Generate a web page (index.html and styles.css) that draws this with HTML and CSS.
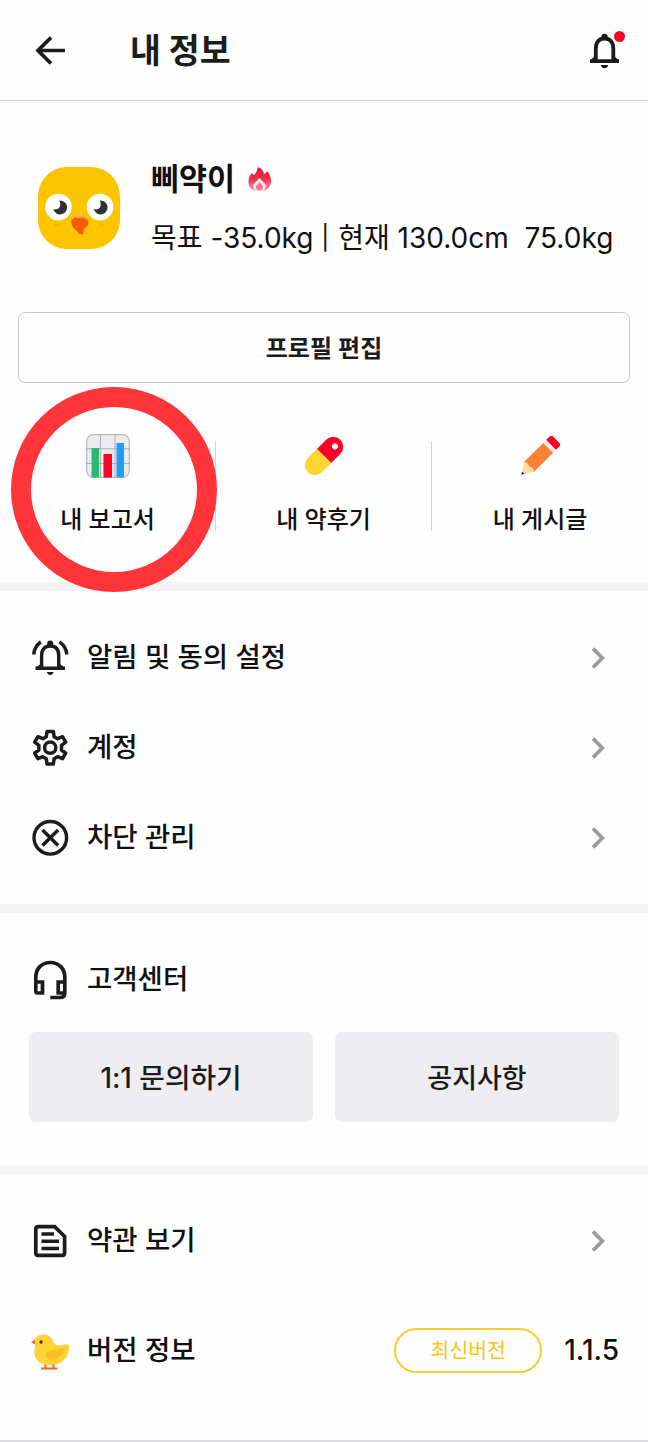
FILE: index.html
```html
<!DOCTYPE html>
<html lang="ko">
<head>
<meta charset="utf-8">
<title>내 정보</title>
<link rel="stylesheet" href="styles.css">
</head>
<body>
<main class="app">
  <header class="header">
    <svg class="back" width="36" height="36" viewBox="0 0 36 36"><path d="M20 5.500 7 18.500l13 13M7 18.500h27" fill="none" stroke="#1c1c1c" stroke-width="3.700"/></svg>
    <h1 class="title">내 정보</h1>
    <span class="bell">
      <svg width="32" height="38" viewBox="0 0 32 38"><path d="M6.800 28.800V17.500C6.800 11 10.400 7.500 15.500 7.500s8.800 3.500 8.800 10V28.800M1 30.200H30" fill="none" stroke="#1c1c1c" stroke-width="3.800"/><path d="m1 29.500 4.500-4v4zM30 29.500l-4.500-4v4zM12.300 8V6a3.200 3.200 0 0 1 6.400 0v2zM11.700 34h7.600q-1 3.200-3.800 3.200T11.700 34z" fill="#1c1c1c"/></svg>
      <i class="dot"></i>
    </span>
  </header>

  <section class="profile">
    <svg class="avatar" width="82" height="82" viewBox="0 0 82 82">
      <path d="M29 0H53C70 0 82 14 82 30V53C82 70 68 82 53 82H29C13 82 0 69 0 53V30C0 13 13 0 29 0z" fill="#fdc500"/>
      <circle cx="20.500" cy="40" r="13.300" fill="#fff"/><circle cx="62" cy="40" r="13.300" fill="#fff"/>
      <path d="M21.500 33.500a7 7 0 1 1-6.200 8.500q4.500 1.500 6.500-2 1-3-.300-6.500z" fill="#303033"/>
      <path d="M62 33.500a7 7 0 1 1-6.200 8.500q4.500 1.500 6.500-2 1-3-.300-6.500z" fill="#303033"/>
      <path d="M33 55q1.500-5.500 8.500-5.500 5 0 9 4.500l-.500 4-4 4-1 5.500q-4 .5-6-3.500-5-3-6-9z" fill="#fb5a05"/>
      <path d="M38 51q0-2.500 3.500-2.500t3.500 2.500z" fill="#fda080"/>
      <path d="M16 57q3-1.500 6 0v2h-6zM60 57q3-1.500 6 0v2h-6z" fill="#f6b500"/>
    </svg>
    <div class="who">
      <div class="name">삐약이
        <svg class="flame" width="24" height="25" viewBox="0 0 24 25"><defs><linearGradient id="fl" x2="0" y2="1"><stop offset="0" stop-color="#ed0e38"/><stop offset=".5" stop-color="#f0304f"/><stop offset="1" stop-color="#fb9bab"/></linearGradient></defs><path d="M10 0q5 2 6 7 2 0 3-3 4 4 4 10 0 10-11.500 10T.5 14.500Q.5 9 4 6q1 2 2 2 3-3 4-8z" fill="url(#fl)"/><path d="m11.500 11 6 6.500q1 6.500-6 6.500t-6-6.500z" fill="#fff0f2"/><path d="m11.500 15 3.500 4q.500 4.500-3.500 4.500T8 19z" fill="#f8758c"/></svg>
      </div>
      <div class="stats">목표 -35.0kg <span class="bar">|</span> 현재 130.0cm&nbsp; 75.0kg</div>
    </div>
  </section>
  <button class="edit">프로필 편집</button>

  <nav class="tabs">
    <a class="tab">
      <svg width="44" height="44" viewBox="0 0 44 44"><rect x=".6" y=".6" width="42.800" height="42.800" rx="7" fill="#ececee" stroke="#b9b9bc" stroke-width="1.200"/><path d="M14.500 1v42M29 1v42M1 14.800h42M1 29.500h42" stroke="#aeaeb2" stroke-width="1"/><path d="M5.500 14H13v29.500H5.500z" fill="#28b873"/><path d="M17.500 20H26v23.500H17.500z" fill="#ff0525"/><path d="M30.500 9H38v34.500h-7.500z" fill="#249cf5"/></svg>
      <span>내 보고서</span>
      <i class="ring"></i>
    </a>
    <a class="tab">
      <svg width="44" height="44" viewBox="0 0 44 44"><g transform="rotate(45 22 22)"><path d="M12 22V9a10 10 0 0 1 20 0V22z" fill="#fb0325"/><path d="M12 22v13a10 10 0 0 0 20 0V22z" fill="#fdd535"/><circle cx="23" cy="7.500" r="3" fill="#fff"/></g></svg>
      <span>내 약후기</span>
    </a>
    <a class="tab">
      <svg width="44" height="44" viewBox="0 0 44 44"><g transform="rotate(45 22 22)"><path d="M15 6.500V1.500Q15-1 17.500-1h9Q29-1 29 1.500V6.500z" fill="#fb0325"/><path d="M15 6.500h14v4H15z" fill="#f5e9e7"/><path d="M15 10.500h14V38H15z" fill="#ff8135"/><path d="m15 37 3.500-1 3.500 1 3.500-1 3.500 1-7 11.500z" fill="#ffdfa0"/><path d="m20.300 45.500 1.700 3 1.700-3z" fill="#333"/></g></svg>
      <span>내 게시글</span>
    </a>
  </nav>

  <section class="menu menu-main">
    <a class="row">
      <svg class="icon" width="38" height="40" viewBox="0 0 38 40"><path d="M10.600 29V17.500C10.600 11 14 8 19.200 8s8.500 3 8.500 9.500V29M4.500 30.300h29.500M2.800 16.500Q3 9 9.800 3.800M35.800 16.500Q35.500 9 28.500 3.800" fill="none" stroke="#1c1c1c" stroke-width="3.400"/><path d="m4.500 30 5-4v4zM34 30l-5-4v4zM16.200 8V5.500a3 3 0 0 1 6 0V8zM15.700 34h7q-1 3-3.500 3t-3.500-3z" fill="#1c1c1c"/></svg>
      <span class="label">알림 및 동의 설정</span>
      <svg class="chev" width="20" height="24" viewBox="0 0 20 24"><path d="m4 2.500 9.300 9.500L4 21.500" fill="none" stroke="#9b9b9b" stroke-width="3.800"/></svg>
    </a>
    <a class="row">
      <svg class="icon" width="38" height="40" viewBox="0 0 38 40"><path d="M16 3.500h6.400l.7 5.200 3.500 2 4.900-2 3.200 5.500-4.200 3.200v4.600l4.200 3.200-3.200 5.500-4.900-2-3.500 2-.7 5.200H16l-.7-5.200-3.500-2-4.900 2-3.200-5.500 4.200-3.200v-4.600l-4.200-3.200L6.900 8.700l4.900 2 3.500-2z" fill="none" stroke="#1c1c1c" stroke-width="3.500" stroke-linejoin="round"/><circle cx="19.200" cy="19.700" r="5.600" fill="none" stroke="#1c1c1c" stroke-width="3.500"/></svg>
      <span class="label">계정</span>
      <svg class="chev" width="20" height="24" viewBox="0 0 20 24"><path d="m4 2.500 9.300 9.500L4 21.500" fill="none" stroke="#9b9b9b" stroke-width="3.800"/></svg>
    </a>
    <a class="row">
      <svg class="icon" width="38" height="40" viewBox="0 0 38 40"><circle cx="19.300" cy="19.800" r="16.300" fill="none" stroke="#1c1c1c" stroke-width="3.400"/><path d="m11.500 12 15.600 15.600m0-15.600L11.500 27.600" stroke="#1c1c1c" stroke-width="3.500"/></svg>
      <span class="label">차단 관리</span>
      <svg class="chev" width="20" height="24" viewBox="0 0 20 24"><path d="m4 2.500 9.300 9.500L4 21.500" fill="none" stroke="#9b9b9b" stroke-width="3.800"/></svg>
    </a>
  </section>

  <section class="menu support">
    <div class="row">
      <svg class="icon" width="38" height="40" viewBox="0 0 38 40"><path d="M4.800 22v-4.500C4.800 8.500 10.700 2.500 19.300 2.500s14.500 6 14.500 15V33q0 4.500-4.500 4.500H19.300M4.800 22H11.500v11H6.800q-2 0-2-2zM33.800 22H27.200v11h6.600" fill="none" stroke="#1c1c1c" stroke-width="3.700"/></svg>
      <span class="label">고객센터</span>
    </div>
    <div class="buttons">
      <button class="gray inquiry">1:1 문의하기</button>
      <button class="gray">공지사항</button>
    </div>
  </section>

  <section class="menu about">
    <a class="row">
      <svg class="icon" width="38" height="40" viewBox="0 0 38 40"><path d="M7.200 5.600h16.500l9.900 9.900V32q0 2.400-2.400 2.400h-24q-2.400 0-2.400-2.400V8q0-2.400 2.400-2.400z" fill="none" stroke="#1c1c1c" stroke-width="3.700"/><path d="M10.500 13h12.500M10.500 20.300h17.500M10.500 27.500h17.500" stroke="#1c1c1c" stroke-width="3.400"/></svg>
      <span class="label">약관 보기</span>
      <svg class="chev" width="20" height="24" viewBox="0 0 20 24"><path d="m4 2.500 9.300 9.500L4 21.500" fill="none" stroke="#9b9b9b" stroke-width="3.800"/></svg>
    </a>
    <div class="row version-row">
      <svg class="icon" width="38" height="40" viewBox="0 0 38 40"><path d="M14.500 33v5.500m-4.500 0h8M22.500 33v5.500m-4.500 0h8.500" fill="none" stroke="#f2641f" stroke-width="2"/><path d="M3 10.500Q6 4 13 4.500q7 .5 9 6.500 1.500 4 5 4.300 4 0 9-1.300 2.500.5 2 5Q37.500 26 31 31.500 26 35 18 35 9 35 5 28.500 2 23 4 17.500 4.500 14 3 10.500z" fill="#fdd336"/><path d="M14.500 23q6-3 10-3.500t7.500-1.500q2 1 .5 4Q28.500 29 21.500 29t-7-6z" fill="#fcbc24"/><path d="M3.500 9.500 0 12.500l4.500 2z" fill="#f2641f"/><circle cx="10" cy="12" r="1.700" fill="#49331b"/></svg>
      <span class="label">버전 정보</span>
      <span class="pill">최신버전</span>
      <span class="version">1.1.5</span>
    </div>
  </section>
</main>
</body>
</html>
```
FILE: styles.css
```css
* { box-sizing: border-box; }
body {
  margin: 0;
  background: #fefefe;
  color: #111;
  font-family: Inter, "Noto Sans CJK KR", sans-serif;
}
svg { display: block; flex: none; overflow: visible; }
button { border: 0; padding: 0; font-family: inherit; color: #1c1c1c; }

.app {
  width: 648px;
  height: 1442px;
  border-bottom: 2px solid #dcdcde;
  display: flex;
  flex-direction: column;
}

.header {
  height: 101px;
  border-bottom: 1px solid #d2d2d2;
  display: flex;
  align-items: center;
  padding: 0 27px 0 31px;
}
.title { margin: 0 auto 0 63px; padding-top: 2px; font-size: 33.6px; line-height: 40px; font-weight: 700; color: #1c1c1c; }
.bell { position: relative; }
.dot { position: absolute; right: -4px; top: 0; width: 11px; height: 11px; border-radius: 50%; background: #fb0325; }

.profile { display: flex; align-items: flex-start; gap: 31px; padding: 66px 0 0 38px; height: 211px; }
.who { margin-top: -8px; white-space: nowrap; }
.name { display: flex; align-items: center; gap: 13px; font-size: 30.5px; font-weight: 600; line-height: 40px; }
.stats { margin-top: 20px; font-size: 28px; line-height: 38px; }
.bar { margin-right: 1px; font-size: 24px; font-weight: 400; vertical-align: 2px; line-height: 1; }

.edit {
  margin: 0 18px;
  padding-bottom: 2px;
  height: 71px;
  flex: none;
  border: 1px solid #c5c5c7;
  border-radius: 7px;
  background: transparent;
  font-size: 24px;
  font-weight: 600;
}

.tabs { display: grid; grid-template-columns: repeat(3, 1fr); height: 199px; padding-top: 58px; flex: none; }
.tab {
  position: relative;
  height: 90px;
  display: flex;
  flex-direction: column;
  align-items: center;
  border-right: 1px solid #d4d4d4;
  font-size: 24px;
  font-weight: 500;
  line-height: 34px;
}
.tab:last-child { border-right: 0; }
.tab svg { margin: -7px 0 25px; }
.ring { position: absolute; left: 11px; top: -54px; width: 206px; height: 205px; border: 20px solid #ff3539; border-radius: 50%; z-index: 1; }

.menu { border-top: 9px solid #f4f4f5; padding-left: 31px; }
.menu-main { height: 322px; padding-top: 22px; }
.row { display: flex; align-items: center; height: 90px; padding-right: 39px; gap: 18px; font-size: 27.5px; font-weight: 500; line-height: 40px; }
.label { padding-bottom: 2px; }
.chev { margin-left: auto; }

.support { height: 261px; padding-top: 22px; }
.buttons { display: flex; gap: 22px; margin: 7px 29px 0 -2px; }
.gray { flex: 1; height: 90px; padding-bottom: 2px; border-radius: 7px; background: #eeeef0; font-size: 27px; font-weight: 500; }
.inquiry { font-size: 27.8px; }

.about { padding-top: 22px; }
.version-row { margin-top: 20px; padding: 0 29px 2px 0; }
.version-row .label { padding-bottom: 0; }
.pill {
  margin-left: auto;
  width: 148px;
  height: 45px;
  border: 2px solid #f5cc30;
  border-radius: 23px;
  color: #f5c518;
  font-size: 20.5px;
  font-weight: 400;
  line-height: 42px;
  text-align: center;
}
.version { margin-left: 4px; font-size: 28px; }
```
